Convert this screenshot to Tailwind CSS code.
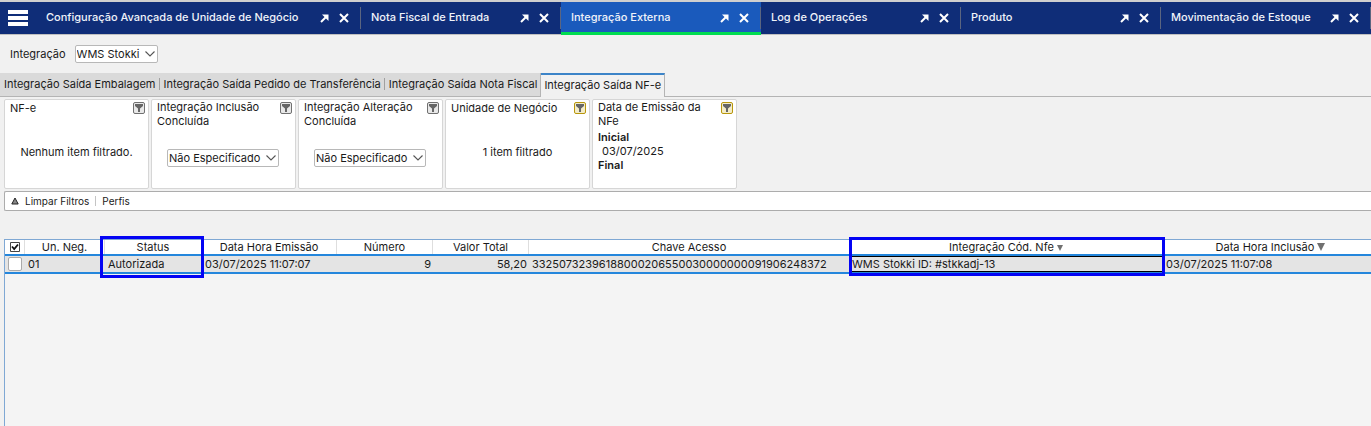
<!DOCTYPE html>
<html lang="pt-BR">
  <head>
    <meta charset="UTF-8" />
    <meta name="viewport" content="width=device-width, initial-scale=1.0" />
    <title>Integração Externa</title>
    <!-- Tailwind CSS -->
    <script src="https://cdn.jsdelivr.net/npm/@tailwindcss/browser@4"></script>
  </head>

  <body
    class="min-h-screen flex flex-col overflow-hidden bg-[#f1f1f1] font-[Inter,sans-serif] text-[11px] leading-[14px] text-[#1a1a1a]"
  >
    <!-- Ícones reutilizados -->
    <svg class="hidden">
      <symbol id="icon-open" viewBox="0 0 9 9">
        <path d="M1 8 L6.5 2.5" stroke="#fff" stroke-width="2" fill="none" />
        <path d="M2 0.5 H8.5 V7 L6.5 5 L4 2.5 Z" fill="#fff" />
      </symbol>
      <symbol id="icon-close" viewBox="0 0 10 10">
        <path d="M1 1 L9 9 M9 1 L1 9" stroke="#fff" stroke-width="2" fill="none" />
      </symbol>
      <symbol id="icon-chevron" viewBox="0 0 10 6">
        <path d="M0.5 0.5 L5 5 L9.5 0.5" stroke="#555" stroke-width="1.1" fill="none" />
      </symbol>
      <symbol id="icon-funnel" viewBox="0 0 8 8">
        <path d="M0 0 H8 V2 L5 4.5 V8 H3 V4.5 L0 2 Z" fill="#666" />
      </symbol>
      <symbol id="icon-sort" viewBox="0 0 8 8">
        <path d="M0 0 H8 L4 8 Z" fill="#707070" />
      </symbol>
    </svg>

    <!-- Barra de janelas -->
    <header
      class="flex h-[35px] shrink-0 border-t-2 border-b border-t-[#cfcfcf] border-b-[#c0c0c0] bg-[#0f2d78] font-medium text-[#f0f3fa]"
    >
      <button type="button" aria-label="Menu" class="w-9 shrink-0 pl-2">
        <svg class="w-5 h-4" viewBox="0 0 20 16" fill="#fff">
          <path d="M0 0H20V4H0Z M0 6H20V10H0Z M0 12H20V16H0Z" />
        </svg>
      </button>
      <nav class="flex">
        <div class="relative flex min-w-[325px] shrink-0 items-center justify-between pl-[10px] pr-3">
          <a href="#" class="pb-[2px] whitespace-nowrap">Configuração Avançada de Unidade de Negócio</a>
          <div class="ml-3 flex items-center gap-[10px]">
            <button type="button" aria-label="Destacar"><svg class="block size-[9px]"><use href="#icon-open" /></svg></button>
            <button type="button" aria-label="Fechar"><svg class="block size-[10px]"><use href="#icon-close" /></svg></button>
          </div>
          <span class="absolute right-0 top-[5px] h-[22px] w-px bg-[#5b6580]"></span>
        </div>
        <div class="relative flex min-w-[200px] shrink-0 items-center justify-between pl-[10px] pr-3">
          <a href="#" class="pb-[2px] whitespace-nowrap">Nota Fiscal de Entrada</a>
          <div class="ml-3 flex items-center gap-[10px]">
            <button type="button" aria-label="Destacar"><svg class="block size-[9px]"><use href="#icon-open" /></svg></button>
            <button type="button" aria-label="Fechar"><svg class="block size-[10px]"><use href="#icon-close" /></svg></button>
          </div>
          <span class="absolute right-0 top-[5px] h-[22px] w-px bg-[#5b6580]"></span>
        </div>
        <!-- Janela ativa -->
        <div class="relative flex min-w-[200px] shrink-0 items-center justify-between bg-[#1a5abc] pl-[10px] pr-3">
          <a href="#" class="pb-[2px] whitespace-nowrap">Integração Externa</a>
          <div class="ml-3 flex items-center gap-[10px]">
            <button type="button" aria-label="Destacar"><svg class="block size-[9px]"><use href="#icon-open" /></svg></button>
            <button type="button" aria-label="Fechar"><svg class="block size-[10px]"><use href="#icon-close" /></svg></button>
          </div>
          <span class="absolute right-0 top-[5px] h-[22px] w-px bg-[#5b6580]"></span>
          <span class="absolute inset-x-0 -bottom-px h-[3px] bg-[#00dc50]"></span>
        </div>
        <div class="relative flex min-w-[200px] shrink-0 items-center justify-between pl-[10px] pr-3">
          <a href="#" class="pb-[2px] whitespace-nowrap">Log de Operações</a>
          <div class="ml-3 flex items-center gap-[10px]">
            <button type="button" aria-label="Destacar"><svg class="block size-[9px]"><use href="#icon-open" /></svg></button>
            <button type="button" aria-label="Fechar"><svg class="block size-[10px]"><use href="#icon-close" /></svg></button>
          </div>
          <span class="absolute right-0 top-[5px] h-[22px] w-px bg-[#5b6580]"></span>
        </div>
        <div class="relative flex min-w-[200px] shrink-0 items-center justify-between pl-[10px] pr-3">
          <a href="#" class="pb-[2px] whitespace-nowrap">Produto</a>
          <div class="ml-3 flex items-center gap-[10px]">
            <button type="button" aria-label="Destacar"><svg class="block size-[9px]"><use href="#icon-open" /></svg></button>
            <button type="button" aria-label="Fechar"><svg class="block size-[10px]"><use href="#icon-close" /></svg></button>
          </div>
          <span class="absolute right-0 top-[5px] h-[22px] w-px bg-[#5b6580]"></span>
        </div>
        <div class="relative flex min-w-[210px] shrink-0 items-center justify-between pl-[10px] pr-3">
          <a href="#" class="pb-[2px] whitespace-nowrap">Movimentação de Estoque</a>
          <div class="ml-3 flex items-center gap-[10px]">
            <button type="button" aria-label="Destacar"><svg class="block size-[9px]"><use href="#icon-open" /></svg></button>
            <button type="button" aria-label="Fechar"><svg class="block size-[10px]"><use href="#icon-close" /></svg></button>
          </div>
          <span class="absolute right-0 top-[5px] h-[22px] w-px bg-[#5b6580]"></span>
        </div>
      </nav>
    </header>

    <main class="flex flex-1 flex-col">
      <!-- Seleção da integração -->
      <div class="flex items-center gap-[9px] px-[10px] pt-[10px] pb-[10px]">
        <label for="integracao">Integração</label>
        <div class="relative">
          <select id="integracao" class="block h-[18px] w-[83px] appearance-none rounded-[2px] border border-[#b8b8b8] bg-white pl-px">
            <option>WMS Stokki</option>
          </select>
          <svg class="pointer-events-none absolute right-[3px] top-[6px] h-[6px] w-[10px]"><use href="#icon-chevron" /></svg>
        </div>
      </div>

      <!-- Abas -->
      <div class="flex h-6" role="tablist">
        <div class="flex items-center border-r border-b border-[#b4b4b4] bg-[#dadada] pb-px">
          <button type="button" role="tab" class="pr-[3px] pl-1 whitespace-nowrap">Integração Saída Embalagem</button>
          <span class="h-3 w-px bg-[#a0a0a0]"></span>
          <button type="button" role="tab" class="pr-[3px] pl-1 whitespace-nowrap">Integração Saída Pedido de Transferência</button>
          <span class="h-3 w-px bg-[#a0a0a0]"></span>
          <button type="button" role="tab" class="pr-[3px] pl-1 whitespace-nowrap">Integração Saída Nota Fiscal</button>
        </div>
        <button type="button" role="tab" aria-selected="true" class="border-t-2 border-r border-t-[#3c84c8] border-r-[#b4b4b4] px-[3px] pb-[3px] whitespace-nowrap">
          Integração Saída NF-e
        </button>
        <span class="flex-1 border-b border-[#b4b4b4]"></span>
      </div>

      <!-- Filtros -->
      <section class="flex gap-[2px] px-1 pt-[2px]">
        <div class="flex h-[90px] w-[145px] flex-col rounded-[2px] border border-[#d6d6d6] bg-white">
          <div class="flex h-7 items-start justify-between pl-[5px] pr-[3px]">
            <h2 class="pt-px whitespace-nowrap">NF-e</h2>
            <button type="button" aria-label="Filtrar" class="mt-[2px] flex size-3 items-center justify-center rounded-[2px] border border-[#707070] bg-[#e8e8e8]"><svg class="size-2"><use href="#icon-funnel" /></svg></button>
          </div>
          <p class="pt-[17px] text-center">Nenhum item filtrado.</p>
        </div>
        <div class="flex h-[90px] w-[145px] flex-col rounded-[2px] border border-[#d6d6d6] bg-white">
          <div class="flex h-7 items-start justify-between pl-[5px] pr-[3px]">
            <h2><label for="inclusao">Integração Inclusão<br />Concluída</label></h2>
            <button type="button" aria-label="Filtrar" class="mt-[2px] flex size-3 items-center justify-center rounded-[2px] border border-[#707070] bg-[#e8e8e8]"><svg class="size-2"><use href="#icon-funnel" /></svg></button>
          </div>
          <div class="relative mt-[21px] ml-[15px] w-[112px]">
            <select id="inclusao" class="block h-[18px] w-full appearance-none rounded-[2px] border border-[#b8b8b8] bg-white pl-px">
              <option>Não Especificado</option>
            </select>
            <svg class="pointer-events-none absolute right-[3px] top-[6px] h-[6px] w-[10px]"><use href="#icon-chevron" /></svg>
          </div>
        </div>
        <div class="flex h-[90px] w-[145px] flex-col rounded-[2px] border border-[#d6d6d6] bg-white">
          <div class="flex h-7 items-start justify-between pl-[5px] pr-[3px]">
            <h2><label for="alteracao">Integração Alteração<br />Concluída</label></h2>
            <button type="button" aria-label="Filtrar" class="mt-[2px] flex size-3 items-center justify-center rounded-[2px] border border-[#707070] bg-[#e8e8e8]"><svg class="size-2"><use href="#icon-funnel" /></svg></button>
          </div>
          <div class="relative mt-[21px] ml-[15px] w-[112px]">
            <select id="alteracao" class="block h-[18px] w-full appearance-none rounded-[2px] border border-[#b8b8b8] bg-white pl-px">
              <option>Não Especificado</option>
            </select>
            <svg class="pointer-events-none absolute right-[3px] top-[6px] h-[6px] w-[10px]"><use href="#icon-chevron" /></svg>
          </div>
        </div>
        <div class="flex h-[90px] w-[145px] flex-col rounded-[2px] border border-[#d6d6d6] bg-white">
          <div class="flex h-7 items-start justify-between pl-[5px] pr-[3px]">
            <h2 class="pt-px whitespace-nowrap">Unidade de Negócio</h2>
            <button type="button" aria-label="Filtrar" class="mt-[2px] flex size-3 items-center justify-center rounded-[2px] border border-[#b8960c] bg-[#f3ecc8]"><svg class="size-2"><use href="#icon-funnel" /></svg></button>
          </div>
          <p class="pt-[17px] text-center">1 item filtrado</p>
        </div>
        <div class="flex h-[90px] w-[145px] flex-col rounded-[2px] border border-[#d6d6d6] bg-white">
          <div class="flex h-7 items-start justify-between pl-[5px] pr-[3px]">
            <h2>Data de Emissão da<br />NFe</h2>
            <button type="button" aria-label="Filtrar" class="mt-[2px] flex size-3 items-center justify-center rounded-[2px] border border-[#b8960c] bg-[#f3ecc8]"><svg class="size-2"><use href="#icon-funnel" /></svg></button>
          </div>
          <dl class="pt-[2px] pl-[5px]">
            <dt class="font-semibold">Inicial</dt>
            <dd class="pl-1">03/07/2025</dd>
            <dt class="font-semibold">Final</dt>
          </dl>
        </div>
      </section>

      <!-- Ações dos filtros -->
      <div class="mt-[2px] ml-1 flex h-5 items-center rounded-l-[2px] border border-r-0 border-[#acacac] bg-white pl-[6px] text-[10px]">
        <button type="button" class="flex items-center gap-[6px]">
          <svg class="h-2 w-2" viewBox="0 0 8 8">
            <path d="M4 1 L7.2 7 H0.8 Z" fill="#888" stroke="#222" />
          </svg>
          Limpar Filtros
        </button>
        <span class="mx-[6px] h-[10px] w-px bg-[#c4c4c4]"></span>
        <button type="button">Perfis</button>
      </div>

      <!-- Notas fiscais -->
      <div class="mt-7 ml-1 flex-1 border-t border-l border-[#7fa8d4] bg-[#f4f4f4]">
        <table class="w-[calc(100%+8px)] table-fixed border-separate border-spacing-0 whitespace-nowrap">
          <colgroup>
            <col class="w-5" />
            <col class="w-[80px]" />
            <col class="w-[97px]" />
            <col class="w-[135px]" />
            <col class="w-[96px]" />
            <col class="w-[96px]" />
            <col class="w-[321px]" />
            <col class="w-[313px]" />
            <col />
          </colgroup>
          <thead>
            <tr class="h-[14px] bg-white *:border-r *:border-[#dedede] *:p-0 *:font-normal">
              <th>
                <input type="checkbox" checked aria-label="Selecionar tudo" class="peer sr-only" />
                <svg class="mx-auto block size-[10px]" viewBox="0 0 10 10">
                  <path d="M0.5 0.5 H9.5 V9.5 H0.5 Z" fill="#fff" stroke="#444" />
                  <path d="M2 4.5 L4.2 7 L8 2.5" fill="none" stroke="#111" stroke-width="1.8" />
                </svg>
              </th>
              <th>Un. Neg.</th>
              <th class="relative">
                Status
                <span class="pointer-events-none absolute -top-1 -left-[5px] z-10 h-[42px] w-[104px] border-3 border-[#0404f4]"></span>
              </th>
              <th>Data Hora Emissão</th>
              <th>Número</th>
              <th>Valor Total</th>
              <th>Chave Acesso</th>
              <th class="relative">
                Integração Cód. Nfe <svg class="inline size-[6px] align-baseline"><use href="#icon-sort" /></svg>
                <span class="pointer-events-none absolute -top-[3px] -left-px z-10 h-[39px] w-[316px] border-3 border-[#0404f4]"></span>
              </th>
              <th>Data Hora Inclusão <svg class="inline size-2 align-baseline"><use href="#icon-sort" /></svg></th>
            </tr>
          </thead>
          <tbody>
            <tr class="h-5 bg-[#e4e4e4] *:border-y-2 *:border-[#2486dc] *:p-0">
              <td>
                <input type="checkbox" aria-label="Selecionar nota" class="mx-auto block size-[14px] appearance-none rounded-[2px] border border-[#aaa] bg-white" />
              </td>
              <td><span class="pl-[3px]">01</span></td>
              <td><span class="pl-[3px]">Autorizada</span></td>
              <td><span class="pl-[3px]">03/07/2025 11:07:07</span></td>
              <td class="text-right"><span class="pr-[2px]">9</span></td>
              <td class="text-right"><span class="pr-[2px]">58,20</span></td>
              <td><span class="pl-[3px]">33250732396188000206550030000000091906248372</span></td>
              <td><div class="h-4 border-y border-black pl-[2px] leading-[14px]">WMS Stokki ID: #stkkadj-13</div></td>
              <td><span class="pl-[3px]">03/07/2025 11:07:08</span></td>
            </tr>
          </tbody>
        </table>
      </div>
    </main>
  </body>
</html>
